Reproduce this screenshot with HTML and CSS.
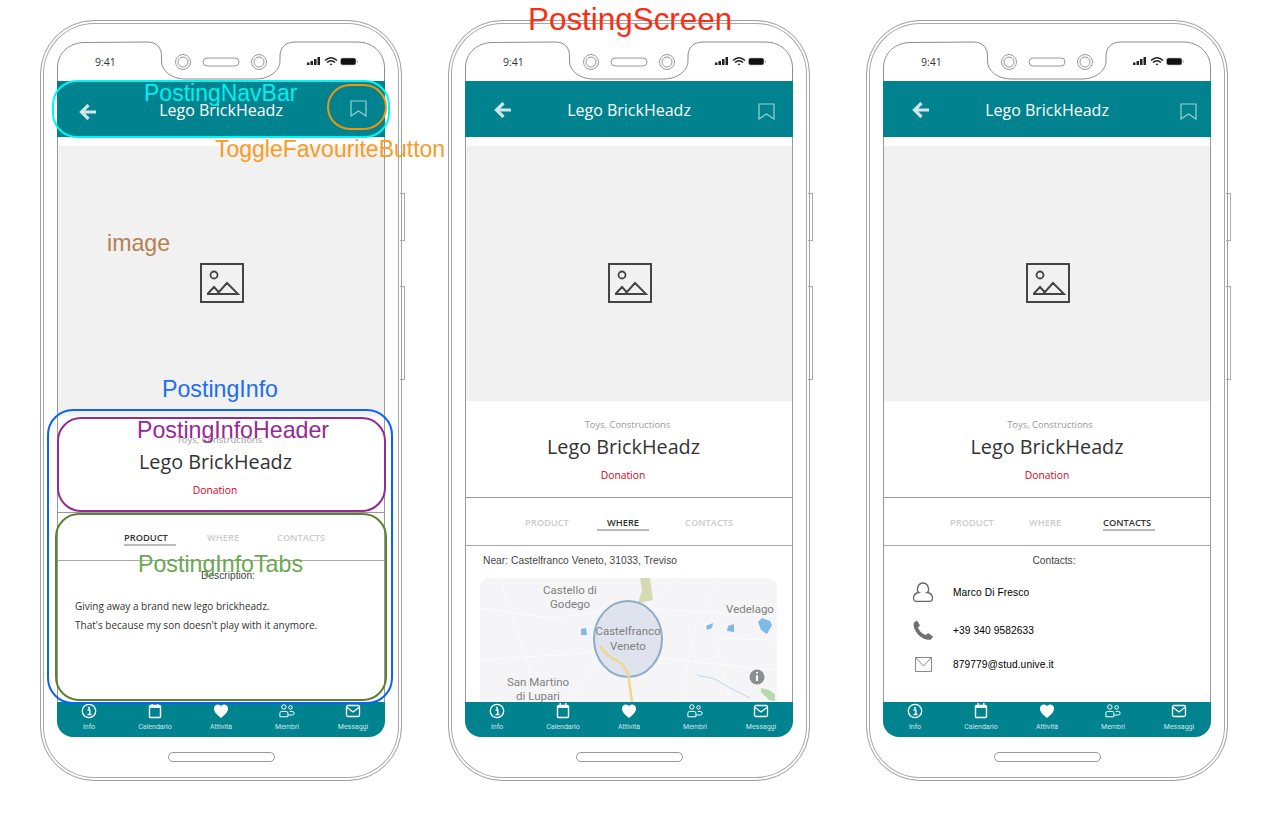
FILE: index.html
```html
<!DOCTYPE html>
<html lang="en">

<head>
    <meta charset="UTF-8" />
    <title>PostingScreen</title>
    <link rel="stylesheet" href="styles.css">
</head>

<body>
    <svg class="defs" width="0" height="0">
        <symbol id="top" viewBox="0 0 328 40">
            <path d="M.5 40V27C.5 12 12 1.5 28 1.5L90 1C100 1 104.5 7 104.5 15V20C104.5 30 115 38 128 38H199C212 38 223 30 223 20V15C223 7 228 1 238 1H300C316 1 327.5 12 327.5 27V40" fill="none" stroke="#8c8c8c" />
            <circle cx="126" cy="21" r="7.5" fill="none" stroke="#999" />
            <circle cx="126" cy="21" r="5" fill="none" stroke="#999" />
            <circle cx="202" cy="21" r="7.5" fill="none" stroke="#999" />
            <circle cx="202" cy="21" r="5" fill="none" stroke="#999" />
            <rect x="146" y="17" width="36" height="8" rx="4" fill="none" stroke="#999" />
            <path d="M250 24h2.500v-2.500H250zM253.500 24h2.500v-4H253.500zM257 24h2.500v-6H257zM260.500 24h2.500v-8H260.500z" fill="#222" />
            <path d="M268 19.500Q274 14 280 19.500M270 21.500Q274 18 278 21.500" fill="none" stroke="#222" stroke-width="1.600" />
            <path d="M272.500 23l1.500 1.500 1.500-1.500q-1.500-1-3 0z" fill="#222" />
            <rect x="283.500" y="17" width="15.500" height="7" rx="2" fill="#111" stroke="#bbb" stroke-width=".6" />
            <path d="M300.500 19.500v2" stroke="#aaa" />
        </symbol>
        <symbol id="back" viewBox="0 0 17 16">
            <path d="M17 8H3M9.500 1 2.500 8l7 7" fill="none" stroke="#cfe5e8" stroke-width="3.200" />
        </symbol>
        <symbol id="mark" viewBox="0 0 17 17">
            <path d="M1 1H16V16L8.500 11 1 16Z" fill="none" stroke="#9fcdd2" stroke-width="1.200" />
        </symbol>
        <symbol id="picture" viewBox="0 0 44 40">
            <rect x="1" y="1" width="42" height="38" fill="none" stroke="#444" stroke-width="2" />
            <circle cx="14" cy="12" r="3.500" fill="none" stroke="#444" stroke-width="1.800" />
            <path d="M7.500 31 14 24l5.500 6M17 31h21L27 20 18 30ZM7 31h12" fill="none" stroke="#444" stroke-width="1.900" />
        </symbol>
        <symbol id="info" viewBox="0 0 16 16">
            <circle cx="8" cy="8" r="6.700" fill="none" stroke="#fff" stroke-width="1.300" />
            <path d="M6.500 7h2.300v4.500M6.500 11.500h4" fill="none" stroke="#fff" stroke-width="1.400" />
            <circle cx="8" cy="4.800" r="1.100" fill="#fff" />
        </symbol>
        <symbol id="calendar" viewBox="0 0 16 16">
            <rect x="2.500" y="2.500" width="11" height="12" rx="1" fill="none" stroke="#fff" stroke-width="1.400" />
            <path d="M2.500 3h11v2h-11zM4.500 0h1.500v3H4.500zM10 0h1.500v3H10z" fill="#fff" />
        </symbol>
        <symbol id="heart" viewBox="0 0 16 16">
            <path d="M8 15C3 11 1 8.500 1 5.500 1 3 3 1.500 5 1.500 6.300 1.500 7.400 2.300 8 3.300 8.600 2.300 9.700 1.500 11 1.500 13 1.500 15 3 15 5.500 15 8.500 13 11 8 15Z" fill="#fff" />
        </symbol>
        <symbol id="people" viewBox="0 0 18 16">
            <circle cx="5.500" cy="3.500" r="2.500" fill="none" stroke="#fff" stroke-width="1.100" />
            <circle cx="13" cy="4" r="2" fill="none" stroke="#fff" stroke-width="1.100" />
            <path d="M1 14.500V10.500Q1 8.500 3 8.500H8Q10 8.500 10 10.500V14.500ZM12 8.500H15Q17 8.500 17 10.500T15 12.500H10" fill="none" stroke="#fff" stroke-width="1.100" />
        </symbol>
        <symbol id="mail" viewBox="0 0 16 16">
            <rect x="1.500" y="2.500" width="13" height="11" rx="1.500" fill="none" stroke="#fff" stroke-width="1.300" />
            <path d="M2 4.500 8 9l6-4.500" fill="none" stroke="#fff" stroke-width="1.300" />
        </symbol>
        <symbol id="person" viewBox="0 0 20 20">
            <path d="M6 10.500C3 9 4.500 1 10 1S17 9 14 10.500C17 11 19.500 13 19.500 16 19.500 18 18 19.500 16 19.500H4C2 19.500.5 18 .5 16 .5 13 3 11 6 10.500Z" fill="none" stroke="#666" stroke-width="1.300" />
        </symbol>
        <symbol id="phone" viewBox="0 0 20 20">
            <path d="M1 2.500 4 .500 7 5.500 5 7.500C6 10.500 9 14 13 15L15 13 20 16.500 18 19.500C15 20.500 9 19 5 14.500 1 10 0 5.500 1 2.500Z" fill="#707070" />
        </symbol>
        <symbol id="envelope" viewBox="0 0 17 15">
            <path d="M.500.500H16.500V14.500H.500ZM.500.500 8.500 9 16.500.500" fill="none" stroke="#888" />
        </symbol>
    </svg>

    <div class="canvas">
        <div class="phone first">
            <div class="screen">
                <svg class="top"><use href="#top" /></svg>
                <div class="status">9:41</div>
                <div class="navbar">
                    <svg class="back"><use href="#back" /></svg>
                    <div class="nav-title">Lego BrickHeadz</div>
                    <svg class="mark"><use href="#mark" /></svg>
                </div>
                <div class="body">
                    <div class="image"><svg class="picture"><use href="#picture" /></svg></div>
                    <div class="info">
                        <div class="category">Toys, Constructions</div>
                        <div class="name">Lego BrickHeadz</div>
                        <div class="kind">Donation</div>
                    </div>
                    <div class="tabs">
                        <div class="tab active">PRODUCT</div>
                        <div class="tab">WHERE</div>
                        <div class="tab">CONTACTS</div>
                    </div>
                    <div class="content">
                        <div class="label">Description:</div>
                        <p class="desc">Giving away a brand new lego brickheadz.<br>That's because my son doesn't play with it anymore.</p>
                    </div>
                </div>
                <div class="tabbar">
                    <div class="item"><svg><use href="#info" /></svg>Info</div>
                    <div class="item"><svg><use href="#calendar" /></svg>Calendario</div>
                    <div class="item"><svg><use href="#heart" /></svg>Attività</div>
                    <div class="item"><svg><use href="#people" /></svg>Membri</div>
                    <div class="item"><svg><use href="#mail" /></svg>Messaggi</div>
                </div>
            </div>
            <div class="home"></div>
            <div class="side side-a"></div>
            <div class="side side-b"></div>
        </div>

        <div class="phone second">
            <div class="screen">
                <svg class="top"><use href="#top" /></svg>
                <div class="status">9:41</div>
                <div class="navbar">
                    <svg class="back"><use href="#back" /></svg>
                    <div class="nav-title">Lego BrickHeadz</div>
                    <svg class="mark"><use href="#mark" /></svg>
                </div>
                <div class="body">
                    <div class="image"><svg class="picture"><use href="#picture" /></svg></div>
                    <div class="info">
                        <div class="category">Toys, Constructions</div>
                        <div class="name">Lego BrickHeadz</div>
                        <div class="kind">Donation</div>
                    </div>
                    <div class="tabs">
                        <div class="tab">PRODUCT</div>
                        <div class="tab active">WHERE</div>
                        <div class="tab">CONTACTS</div>
                    </div>
                    <div class="content">
                        <div class="near">Near: Castelfranco Veneto, 31033, Treviso</div>
                        <svg class="map" viewBox="0 0 297 124">
                            <rect width="297" height="140" rx="9" fill="#f5f5f7" />
                            <path d="M0 30 70 40 150 30 297 38M20 0 60 124M0 82 120 74 297 92M90 124 130 60 200 0M200 124 215 50 240 0M250 124 235 60 297 62" fill="none" stroke="#fbfbfc" />
                            <path d="M160 0H170L173 22 158 25 162 12Z" fill="#d6dab4" />
                            <path d="M101 51l5-1 1 7-6 0zM226 48l7-3-1 5-5 2zM248 48l6-2v8l-7-1zM278 44l4-4 8 3 2 4-5 9-6-4z" fill="#7dbbe6" />
                            <path d="M281 110l8 2 6 4v7l-6-1-8-8z" fill="#b9d8ae" />
                            <path d="M217 97 235 101 250 110 270 120" fill="none" stroke="#b9daf0" />
                            <ellipse cx="148" cy="61" rx="34" ry="38" fill="#dfe3ee" stroke="#8eacc9" stroke-width="2" />
                            <path d="M120 68Q127 79 138 83 148 90 149 102L152 124" fill="none" stroke="#eed88f" stroke-width="2.500" />
                            <circle cx="277" cy="99" r="7.500" fill="#889090" />
                            <path d="M277 97v6M277 94v1.500" stroke="#fff" stroke-width="2" />
                            <g class="map-text">
                                <text x="90" y="16">Castello di</text>
                                <text x="90" y="30">Godego</text>
                                <text x="270" y="35">Vedelago</text>
                                <text x="148" y="57">Castelfranco</text>
                                <text x="148" y="72">Veneto</text>
                                <text x="58" y="108">San Martino</text>
                                <text x="58" y="122">di Lupari</text>
                            </g>
                        </svg>
                    </div>
                </div>
                <div class="tabbar">
                    <div class="item"><svg><use href="#info" /></svg>Info</div>
                    <div class="item"><svg><use href="#calendar" /></svg>Calendario</div>
                    <div class="item"><svg><use href="#heart" /></svg>Attività</div>
                    <div class="item"><svg><use href="#people" /></svg>Membri</div>
                    <div class="item"><svg><use href="#mail" /></svg>Messaggi</div>
                </div>
            </div>
            <div class="home"></div>
            <div class="side side-a"></div>
            <div class="side side-b"></div>
        </div>

        <div class="phone third">
            <div class="screen">
                <svg class="top"><use href="#top" /></svg>
                <div class="status">9:41</div>
                <div class="navbar">
                    <svg class="back"><use href="#back" /></svg>
                    <div class="nav-title">Lego BrickHeadz</div>
                    <svg class="mark"><use href="#mark" /></svg>
                </div>
                <div class="body">
                    <div class="image"><svg class="picture"><use href="#picture" /></svg></div>
                    <div class="info">
                        <div class="category">Toys, Constructions</div>
                        <div class="name">Lego BrickHeadz</div>
                        <div class="kind">Donation</div>
                    </div>
                    <div class="tabs">
                        <div class="tab">PRODUCT</div>
                        <div class="tab">WHERE</div>
                        <div class="tab active">CONTACTS</div>
                    </div>
                    <div class="content">
                        <div class="label">Contacts:</div>
                        <div class="contact"><svg><use href="#person" /></svg>Marco Di Fresco</div>
                        <div class="contact"><svg><use href="#phone" /></svg>+39 340 9582633</div>
                        <div class="contact"><svg class="envelope"><use href="#envelope" /></svg>879779@stud.unive.it</div>
                    </div>
                </div>
                <div class="tabbar">
                    <div class="item"><svg><use href="#info" /></svg>Info</div>
                    <div class="item"><svg><use href="#calendar" /></svg>Calendario</div>
                    <div class="item"><svg><use href="#heart" /></svg>Attività</div>
                    <div class="item"><svg><use href="#people" /></svg>Membri</div>
                    <div class="item"><svg><use href="#mail" /></svg>Messaggi</div>
                </div>
            </div>
            <div class="home"></div>
            <div class="side side-a"></div>
            <div class="side side-b"></div>
        </div>

        <!-- annotations on top of the mockups -->
        <div class="box box-nav"></div>
        <div class="box box-fav"></div>
        <div class="box box-info"></div>
        <div class="box box-header"></div>
        <div class="box box-tabs"></div>
        <div class="note note-screen">PostingScreen</div>
        <div class="note note-nav">PostingNavBar</div>
        <div class="note note-fav">ToggleFavouriteButton</div>
        <div class="note note-image">image</div>
        <div class="note note-info">PostingInfo</div>
        <div class="note note-header">PostingInfoHeader</div>
        <div class="note note-tabs">PostingInfoTabs</div>
    </div>
</body>

</html>
```

FILE: styles.css
```css
html,
body {
    margin: 0;
    padding: 0;
    background-color: white;
    font-family: "Open Sans", sans-serif;
    overflow: hidden;
}

.defs {
    position: absolute;
}

.canvas {
    position: relative;
    width: 1266px;
    height: 823px;
    box-sizing: border-box;
    padding: 20px 0 0 40px;
    display: flex;
}

.phone {
    position: relative;
    box-sizing: border-box;
    width: 362px;
    height: 761px;
    padding: 21px 17px 0;
    border: 1px solid #a0a0a0;
    border-radius: 54px;
    box-shadow: inset 0 0 0 2px white, inset 0 0 0 3px #a8a8a8;
    background-color: white;
}

.second {
    margin-left: 46px;
}

.third {
    margin-left: 56px;
}

.screen {
    position: relative;
    margin: -1px -1px 0;
    height: 696px;
    display: flex;
    flex-direction: column;
}

.top {
    display: block;
    width: 328px;
    height: 40px;
    flex: none;
}

.status {
    position: absolute;
    top: 14px;
    left: 38px;
    font-size: 10.500px;
    line-height: 14px;
    color: #333;
}

.navbar {
    display: flex;
    align-items: center;
    justify-content: space-between;
    height: 56px;
    flex: none;
    position: relative;
    background-color: #00838f;
    padding: 0 18px 0 29px;
}

.first .navbar {
    padding-left: 22px;
}

.third .navbar {
    padding-right: 14px;
}

.back {
    width: 17px;
    height: 16px;
    margin-top: 2px;
}

.first .back {
    margin-top: 5px;
}

.mark {
    width: 17px;
    height: 17px;
    margin-top: 4px;
}

.first .mark {
    margin-top: -2px;
}

.nav-title {
    position: absolute;
    left: 0;
    right: 0;
    top: 19px;
    text-align: center;
    font-size: 16px;
    line-height: 20px;
    color: white;
}

.body {
    flex: 1;
    min-height: 0;
    display: flex;
    flex-direction: column;
    padding-top: 9px;
    border-left: 1px solid #999;
    border-right: 1px solid #999;
}

.image {
    height: 255px;
    flex: none;
    box-sizing: border-box;
    padding: 117px 0 0 2px;
    display: flex;
    justify-content: center;
    background-color: #f1f1f1;
}

.first .image {
    height: 270px;
}

.picture {
    width: 44px;
    height: 40px;
}

.info {
    box-sizing: border-box;
    height: 97px;
    flex: none;
    padding-top: 16px;
    text-align: center;
    border-bottom: 1px solid #999;
}

.category {
    font-size: 9.400px;
    line-height: 16px;
    color: #999;
    margin-right: 3px;
}

.third .category {
    margin-right: 0;
    margin-left: 6px;
}

.name {
    font-size: 19.800px;
    line-height: 28px;
    color: #333;
    margin-right: 11px;
}

.third .name {
    margin-right: 0;
}

.kind {
    margin: 6px 12px 0 0;
    font-size: 10.300px;
    line-height: 16px;
    color: #d0021b;
}

.third .kind {
    margin-right: 0;
}

.tabs {
    box-sizing: border-box;
    height: 48px;
    flex: none;
    padding: 19px 0 0 66px;
    display: grid;
    grid-template-columns: 83px 70px 1fr;
    border-bottom: 1px solid #aaa;
}

.second .tabs {
    padding-left: 59px;
    grid-template-columns: 83px 77px 1fr;
}

.third .tabs {
    grid-template-columns: 79px 74px 1fr;
}

.tab {
    font-size: 9.300px;
    font-weight: 600;
    line-height: 12px;
    color: #ccc;
    white-space: nowrap;
}

.tab.active {
    width: 52px;
    height: 12px;
    color: #333;
    border-bottom: 2px solid #bbb;
}

.second .tab.active {
    margin-left: -11px;
    text-align: center;
}

.content {
    flex: 1;
    min-height: 0;
    overflow: hidden;
    font-family: "Liberation Sans", sans-serif;
    font-size: 10.200px;
    color: #444;
}

.label {
    padding: 9px 0 0 14px;
    text-align: center;
    line-height: 12px;
}

.desc {
    margin: 15px 0 0 17px;
    font-family: "Open Sans", sans-serif;
    font-size: 10px;
    line-height: 19px;
    color: #333;
}

.near {
    padding: 9px 0 0 17px;
    line-height: 12px;
    letter-spacing: 0.050px;
}

.map {
    display: block;
    margin: 11px 0 0 14px;
    width: 297px;
    height: 124px;
}

.map-text {
    font-family: Roboto, sans-serif;
    font-size: 11.500px;
    fill: #808080;
    text-anchor: middle;
}

.contact {
    display: flex;
    align-items: center;
    height: 24px;
    padding-left: 29px;
    margin-top: 14px;
    color: black;
    letter-spacing: 0.100px;
}

.label + .contact {
    margin-top: 13px;
}

.contact:last-child {
    margin-top: 10px;
}

.contact svg {
    width: 20px;
    height: 20px;
    margin-right: 20px;
    flex: none;
}

.contact .envelope {
    width: 17px;
    height: 15px;
    margin-left: 2px;
    margin-right: 21px;
}

.tabbar {
    height: 35px;
    flex: none;
    display: flex;
    justify-content: space-between;
    padding: 0 8px;
    background-color: #00838f;
    border-radius: 0 0 16px 16px;
}

.item {
    width: 48px;
    display: flex;
    flex-direction: column;
    align-items: center;
    font-family: Roboto, sans-serif;
    font-size: 7px;
    line-height: 10px;
    color: #cfe6e8;
    white-space: nowrap;
}

.item svg {
    width: 16px;
    height: 16px;
    margin: 1px 0 3px;
}

.home {
    box-sizing: border-box;
    width: 107px;
    height: 10px;
    margin: 15px auto 0;
    border: 1px solid #999;
    border-radius: 5px;
}

.side {
    position: absolute;
    left: 359px;
    width: 5px;
    box-sizing: border-box;
    border: 1px solid #aaa;
    border-left: none;
}

.side-a {
    top: 172px;
    height: 48px;
}

.side-b {
    top: 265px;
    height: 94px;
}

.box {
    position: absolute;
    box-sizing: border-box;
    border: 2px solid;
}

.box-nav {
    left: 52px;
    top: 80px;
    width: 338px;
    height: 58px;
    border-color: #00f5f5;
    border-radius: 25px;
}

.box-fav {
    left: 327px;
    top: 84px;
    width: 60px;
    height: 46px;
    border-color: #f0950f;
    border-radius: 23px;
}

.box-info {
    left: 47px;
    top: 409px;
    width: 346px;
    height: 295px;
    border-color: #0b63f6;
    border-radius: 26px;
}

.box-header {
    left: 57px;
    top: 417px;
    width: 329px;
    height: 95px;
    border-color: #942a94;
    border-radius: 24px;
}

.box-tabs {
    left: 55px;
    top: 513px;
    width: 332px;
    height: 188px;
    border-color: #5a8232;
    border-radius: 24px;
}

.note {
    position: absolute;
    font-family: "Liberation Sans", sans-serif;
    font-size: 23.200px;
    line-height: 1;
    white-space: nowrap;
}

.note-screen {
    left: 528px;
    top: 4px;
    font-size: 31.400px;
    color: #fb2d12;
}

.note-nav {
    left: 144px;
    top: 82px;
    font-size: 23px;
    color: #00f0f0;
}

.note-fav {
    left: 215px;
    top: 138px;
    font-size: 23px;
    color: #f79c25;
}

.note-image {
    left: 107px;
    top: 232px;
    color: #b3814f;
}

.note-info {
    left: 162px;
    top: 378px;
    color: #1f6df0;
}

.note-header {
    left: 137px;
    top: 419px;
    color: #942a94;
}

.note-tabs {
    left: 138px;
    top: 553px;
    color: #6aa84f;
}
```
